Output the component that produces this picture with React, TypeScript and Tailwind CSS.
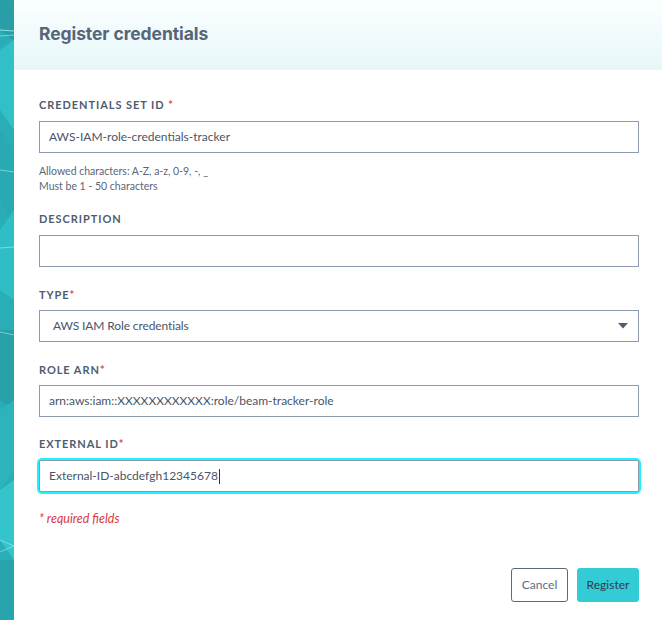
import React from 'react';

const Label: React.FC<{ text: string; required?: boolean }> = ({ text, required }) => (
  <div className="text-[11px] font-bold tracking-[0.085em] text-[#4f5d70] leading-none">
    {text}
    {required && <span className="text-[#e5484d]">*</span>}
  </div>
);

const Field: React.FC<{ value?: string }> = ({ value }) => (
  <div className="h-[32px] border border-[#8d9bae] bg-white flex items-center px-[9px] text-[12px] text-[#4a5568]">
    {value}
  </div>
);

const Strip: React.FC = () => (
  <svg width="14" height="620" viewBox="0 0 14 620" className="block shrink-0">
    <rect width="14" height="620" fill="#2aaeb6" />
    <polygon points="0,0 14,0 14,40 0,30" fill="#2a9ea6" />
    <polygon points="0,50 14,40 14,130 0,110" fill="#31c0c8" />
    <polygon points="0,130 14,150 14,230 0,200" fill="#29a9b1" />
    <polygon points="0,230 14,210 14,300 0,290" fill="#30bec6" />
    <polygon points="0,330 14,330 14,410 0,400" fill="#27a0a8" />
    <polygon points="0,410 14,400 14,470 0,490" fill="#2cb3bb" />
    <polygon points="0,490 14,480 14,560 0,540" fill="#33c4cc" />
    <polygon points="0,560 14,560 14,620 0,620" fill="#28a4ac" />
    <line x1="0" y1="30" x2="14" y2="31" stroke="#a8eef2" strokeWidth="0.8" />
    <line x1="0" y1="36" x2="14" y2="35" stroke="#a8eef2" strokeWidth="0.6" />
    <line x1="0" y1="170" x2="14" y2="172" stroke="#a8eef2" strokeWidth="0.6" />
    <line x1="0" y1="248" x2="14" y2="247" stroke="#a8eef2" strokeWidth="0.6" />
    <line x1="0" y1="332" x2="14" y2="335" stroke="#a8eef2" strokeWidth="0.6" />
    <line x1="0" y1="540" x2="14" y2="546" stroke="#a8eef2" strokeWidth="0.6" />
    <line x1="0" y1="552" x2="14" y2="546" stroke="#a8eef2" strokeWidth="0.6" />
  </svg>
);

const App: React.FC = () => {
  return (
    <div className="w-[662px] h-[620px] overflow-hidden flex bg-white" style={{ fontFamily: 'Lato, "Open Sans", sans-serif' }}>
      <Strip />
      <div className="w-[650px] shrink-0 flex flex-col">
        <div className="h-[70px] bg-gradient-to-b from-[#fbfeff] to-[#e6f7f9] flex items-center pl-[25px] pb-[2px]">
          <h1 className="text-[17.5px] font-bold text-[#56657a] tracking-[-0.005em]" style={{ fontFamily: 'Inter, sans-serif' }}>
            Register credentials
          </h1>
        </div>

        <div className="pl-[25px] pr-[25px] pt-[29px] flex flex-col">
          <Label text="CREDENTIALS SET ID " required />
          <div className="mt-[11px]">
            <Field value="AWS-IAM-role-credentials-tracker" />
          </div>
          <div className="mt-[11px] text-[10.5px] leading-[15px] text-[#5b6677]">
            <div>Allowed characters: A-Z, a-z, 0-9, -, _</div>
            <div>Must be 1 - 50 characters</div>
          </div>

          <div className="mt-[19px]">
            <Label text="DESCRIPTION" />
          </div>
          <div className="mt-[11px]">
            <Field />
          </div>

          <div className="mt-[22px]">
            <Label text="TYPE" required />
          </div>
          <div className="mt-[10px] h-[32px] border border-[#8d9bae] flex items-center justify-between pl-[13px] pr-[10px] text-[12px] text-[#4a5568]">
            <span className="tracking-[-0.01em]">AWS IAM Role credentials</span>
            <svg width="10" height="6" viewBox="0 0 10 6">
              <path d="M0 0 H10 L5 5.5 Z" fill="#4f5d70" />
            </svg>
          </div>

          <div className="mt-[22px]">
            <Label text="ROLE ARN" required />
          </div>
          <div className="mt-[10px]">
            <Field value="arn:aws:iam::XXXXXXXXXXXX:role/beam-tracker-role" />
          </div>

          <div className="mt-[21px]">
            <Label text="EXTERNAL ID" required />
          </div>
          <div className="mt-[11px] rounded-[3px] ring-2 ring-[#1ff0ff]">
            <div className="h-[32px] border border-[#8d9bae] rounded-[2px] bg-white flex items-center px-[9px] text-[12px] text-[#4a5568]">
              External-ID-abcdefgh12345678
              <span className="inline-block w-px h-[15px] bg-[#333] ml-px" />
            </div>
          </div>

          <div className="mt-[18px] text-[12.5px] italic text-[#d9383e]">* required fields</div>

          <div className="mt-[39px] flex justify-end gap-[9px]">
            <button className="h-[34px] w-[57px] rounded-[3px] border border-[#5d6a7c] text-[12px] text-[#5d6a7c] bg-white">
              Cancel
            </button>
            <button className="h-[34px] w-[62px] rounded-[3px] bg-[#33ccd6] text-[12px] text-[#2f3b4a]">
              Register
            </button>
          </div>
        </div>
      </div>
    </div>
  );
};

export default App;
